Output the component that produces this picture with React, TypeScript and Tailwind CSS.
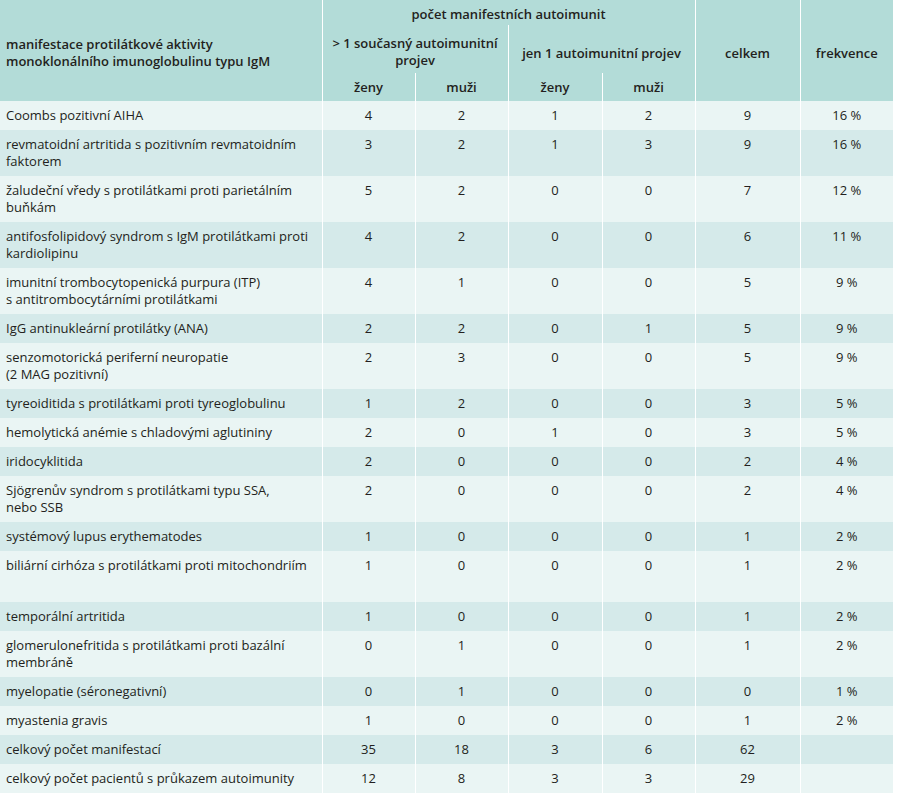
type Row = {
  label: string[];
  v: (string | number)[];
  freq?: string;
  tall?: boolean;
};

const rows: Row[] = [
  { label: ["Coombs pozitivní AIHA"], v: [4, 2, 1, 2, 9], freq: "16 %" },
  { label: ["revmatoidní artritida s pozitivním revmatoidním", "faktorem"], v: [3, 2, 1, 3, 9], freq: "16 %" },
  { label: ["žaludeční vředy s protilátkami proti parietálním", "buňkám"], v: [5, 2, 0, 0, 7], freq: "12 %" },
  { label: ["antifosfolipidový syndrom s IgM protilátkami proti", "kardiolipinu"], v: [4, 2, 0, 0, 6], freq: "11 %" },
  { label: ["imunitní trombocytopenická purpura (ITP)", "s antitrombocytárními protilátkami"], v: [4, 1, 0, 0, 5], freq: "9 %" },
  { label: ["IgG antinukleární protilátky (ANA)"], v: [2, 2, 0, 1, 5], freq: "9 %" },
  { label: ["senzomotorická periferní neuropatie", "(2 MAG pozitivní)"], v: [2, 3, 0, 0, 5], freq: "9 %" },
  { label: ["tyreoiditida s protilátkami proti tyreoglobulinu"], v: [1, 2, 0, 0, 3], freq: "5 %" },
  { label: ["hemolytická anémie s chladovými aglutininy"], v: [2, 0, 1, 0, 3], freq: "5 %" },
  { label: ["iridocyklitida"], v: [2, 0, 0, 0, 2], freq: "4 %" },
  { label: ["Sjögrenův syndrom s protilátkami typu SSA,", "nebo SSB"], v: [2, 0, 0, 0, 2], freq: "4 %" },
  { label: ["systémový lupus erythematodes"], v: [1, 0, 0, 0, 1], freq: "2 %" },
  { label: ["biliární cirhóza s protilátkami proti mitochondriím"], v: [1, 0, 0, 0, 1], freq: "2 %", tall: true },
  { label: ["temporální artritida"], v: [1, 0, 0, 0, 1], freq: "2 %" },
  { label: ["glomerulonefritida s protilátkami proti bazální", "membráně"], v: [0, 1, 0, 0, 1], freq: "2 %" },
  { label: ["myelopatie (séronegativní)"], v: [0, 1, 0, 0, 0], freq: "1 %" },
  { label: ["myastenia gravis"], v: [1, 0, 0, 0, 1], freq: "2 %" },
  { label: ["celkový počet manifestací"], v: [35, 18, 3, 6, 62] },
  { label: ["celkový počet pacientů s průkazem autoimunity"], v: [12, 8, 3, 3, 29] },
];

const th = "font-semibold text-center align-middle border-l border-white";
const td = "text-center align-top pt-[6px] pb-[6px] border-l border-white";

export default function App() {
  return (
    <div className="bg-white w-[897px] min-h-[800px] text-[#231f20] text-[13px] leading-[17px] [font-family:'Open_Sans',sans-serif]">
      <table className="table-fixed border-collapse w-[893px]">
        <colgroup>
          <col className="w-[322px]" />
          <col className="w-[93px]" />
          <col className="w-[93px]" />
          <col className="w-[94px]" />
          <col className="w-[93px]" />
          <col className="w-[105px]" />
          <col className="w-[93px]" />
        </colgroup>
        <thead className="bg-[#b3dcd8]">
          <tr className="h-[25px]">
            <th rowSpan={3} className="font-semibold text-left align-middle pl-[6px] pt-[5px]">
              manifestace protilátkové aktivity
              <br />
              monoklonálního imunoglobulinu typu IgM
            </th>
            <th colSpan={4} className={th + " pt-[3px]"}>
              počet manifestních autoimunit
            </th>
            <th rowSpan={3} className={th + " pt-[5px]"}>celkem</th>
            <th rowSpan={3} className={th + " pt-[5px]"}>frekvence</th>
          </tr>
          <tr className="h-[48px]">
            <th colSpan={2} className={th + " pt-[6px]"}>
              &gt; 1 současný autoimunitní
              <br />
              projev
            </th>
            <th colSpan={2} className={th + " pt-[8px]"}>jen 1 autoimunitní projev</th>
          </tr>
          <tr className="h-[28px]">
            <th className={th}>ženy</th>
            <th className={th}>muži</th>
            <th className={th}>ženy</th>
            <th className={th}>muži</th>
          </tr>
        </thead>
        <tbody>
          {rows.map((r, i) => (
            <tr
              key={i}
              className={(i % 2 === 0 ? "bg-[#eaf5f4]" : "bg-[#d5eaea]") + (r.tall ? " h-[51px]" : "")}
            >
              <td className="text-left align-top pl-[6px] pt-[6px] pb-[6px]">
                {r.label.map((l, j) => (
                  <div key={j}>{l}</div>
                ))}
              </td>
              {r.v.map((n, j) => (
                <td key={j} className={td}>
                  {n}
                </td>
              ))}
              <td className={td}>{r.freq ?? ""}</td>
            </tr>
          ))}
        </tbody>
      </table>
    </div>
  );
}
